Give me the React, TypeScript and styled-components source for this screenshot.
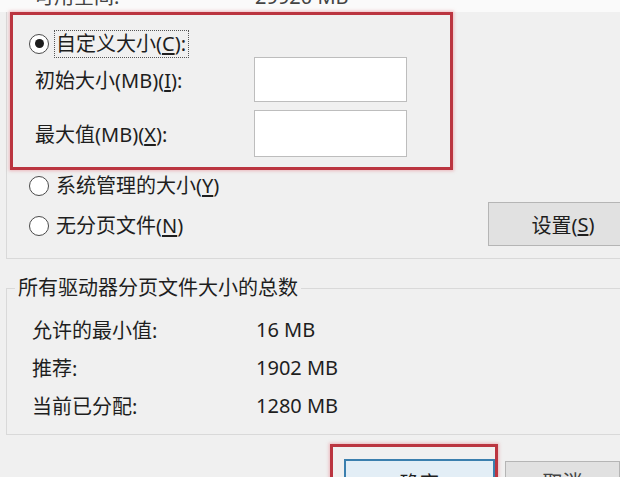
import React from "react";
import styled, { createGlobalStyle } from "styled-components";

const Global = createGlobalStyle`
  html, body { margin: 0; padding: 0; background: #f0f0f0; }
  body { font-family: "Noto Sans", "Noto Sans CJK SC", sans-serif; color: #1e1e1e; }
`;

const Page = styled.div`
  width: 620px;
  height: 477px;
  overflow: hidden;
  background: #f0f0f0;
  font-size: 20px;
`;

const TopStrip = styled.div`
  height: 12px;
  background: #fafafa;
  overflow: hidden;
  display: flex;
  padding-left: 34px;
  box-sizing: border-box;
`;

const CutText = styled.span<{ $w: number }>`
  flex: none;
  width: ${(p) => p.$w}px;
  line-height: 28px;
  margin-top: -17px;
  color: #444;
`;

const Group = styled.div`
  margin-left: 6px;
  width: 640px;
  border-left: 1px solid #d9d9d9;
  border-bottom: 1px solid #d9d9d9;
  padding-left: 3px;
  box-sizing: border-box;
`;

const RedFrame = styled.div`
  width: 443px;
  box-sizing: border-box;
  border: 3px solid #bb3540;
  box-shadow: 0 0 3px 1px rgba(232, 130, 140, 0.5);
  padding: 15px 0 10px 16px;
  display: flex;
  flex-direction: column;
`;

const RadioRow = styled.div<{ $h: number }>`
  height: ${(p) => p.$h}px;
  display: flex;
  align-items: center;
`;

const RadioCircle = styled.span`
  width: 20px;
  height: 20px;
  border-radius: 50%;
  border: 1.5px solid #4a4a4a;
  background: #fff;
  box-sizing: border-box;
  display: flex;
  align-items: center;
  justify-content: center;
  flex: none;
`;

const Dot = styled.span`
  width: 9px;
  height: 9px;
  border-radius: 50%;
  background: #1c1c1c;
`;

const RadioLabel = styled.span<{ $focus?: boolean }>`
  margin-left: 5px;
  line-height: 26px;
  padding: 0 2px 0 1px;
  border: 1px dotted ${(p) => (p.$focus ? "#555" : "transparent")};
`;

const FieldRow = styled.div<{ $mt: number }>`
  display: grid;
  grid-template-columns: 219px 153px;
  align-items: center;
  margin-top: ${(p) => p.$mt}px;
  padding-left: 6px;
`;

const Input = styled.div<{ $h: number }>`
  height: ${(p) => p.$h}px;
  background: #ffffff;
  border: 1px solid #bdbdbd;
  box-sizing: border-box;
`;

const Lower = styled.div`
  display: grid;
  grid-template-columns: 1fr auto;
  padding: 4px 0 12px 0;
`;

const LowerLeft = styled.div`
  display: flex;
  flex-direction: column;
  gap: 16px;
  padding-left: 19px;
`;

const Button = styled.div<{ $w: number; $h: number }>`
  width: ${(p) => p.$w}px;
  height: ${(p) => p.$h}px;
  background: #e1e1e1;
  border: 1px solid #b5b5b5;
  box-sizing: border-box;
  display: flex;
  align-items: center;
  justify-content: center;
`;

const SettingsButton = styled(Button)`
  margin-top: 28px;
  margin-right: 20px;
  padding-left: 12px;
`;

const Fieldset = styled.fieldset`
  margin: 15px 0 0 6px;
  width: 640px;
  box-sizing: border-box;
  border: 1px solid #d9d9d9;
  border-right: none;
  padding: 8px 0 10px 25px;
`;

const Legend = styled.legend`
  margin-left: -17px;
  padding: 0 3px;
  line-height: 28px;
`;

const StatRow = styled.div`
  display: grid;
  grid-template-columns: 224px auto;
  height: 38px;
  align-items: center;
`;

const BottomRow = styled.div`
  display: flex;
  align-items: flex-start;
  margin-top: 9px;
  padding-left: 330px;
`;

const RedFrame2 = styled.div`
  width: 173px;
  height: 60px;
  box-sizing: border-box;
  border: 3px solid #bb3540;
  box-shadow: 0 0 3px 1px rgba(232, 130, 140, 0.5);
  padding: 12px 0 0 11px;
`;

const OkButton = styled.div`
  width: 151px;
  height: 40px;
  box-sizing: border-box;
  border: 2px solid #3b7fae;
  background: #e3eef6;
  display: flex;
  justify-content: center;
  padding-top: 9px;
  line-height: 28px;
`;

const CancelButton = styled(Button)`
  margin: 17px 0 0 7px;
  align-items: flex-start;
  padding-top: 7px;
  line-height: 28px;
  color: #444;
`;

const U = styled.span`
  text-decoration: underline;
  text-underline-offset: 2px;
`;

const Radio: React.FC<{ checked?: boolean }> = ({ checked }) => (
  <RadioCircle>{checked && <Dot />}</RadioCircle>
);

export default function App() {
  return (
    <>
      <Global />
      <Page>
        <TopStrip>
          <CutText $w={221}>可用空间:</CutText>
          <CutText $w={120}>29920 MB</CutText>
        </TopStrip>
        <Group>
          <RedFrame>
            <RadioRow $h={27}>
              <Radio checked />
              <RadioLabel $focus>
                自定义大小(<U>C</U>):
              </RadioLabel>
            </RadioRow>
            <FieldRow $mt={0}>
              <span>
                初始大小(MB)(<U>I</U>):
              </span>
              <Input $h={45} />
            </FieldRow>
            <FieldRow $mt={8}>
              <span>
                最大值(MB)(<U>X</U>):
              </span>
              <Input $h={47} />
            </FieldRow>
          </RedFrame>
          <Lower>
            <LowerLeft>
              <RadioRow $h={24}>
                <Radio />
                <RadioLabel>
                  系统管理的大小(<U>Y</U>)
                </RadioLabel>
              </RadioRow>
              <RadioRow $h={24}>
                <Radio />
                <RadioLabel>
                  无分页文件(<U>N</U>)
                </RadioLabel>
              </RadioRow>
            </LowerLeft>
            <SettingsButton $w={138} $h={44}>
              设置(<U>S</U>)
            </SettingsButton>
          </Lower>
        </Group>
        <Fieldset>
          <Legend>所有驱动器分页文件大小的总数</Legend>
          <StatRow>
            <span>允许的最小值:</span>
            <span>16 MB</span>
          </StatRow>
          <StatRow>
            <span>推荐:</span>
            <span>1902 MB</span>
          </StatRow>
          <StatRow>
            <span>当前已分配:</span>
            <span>1280 MB</span>
          </StatRow>
        </Fieldset>
        <BottomRow>
          <RedFrame2>
            <OkButton>确定</OkButton>
          </RedFrame2>
          <CancelButton $w={120} $h={40}>
            取消
          </CancelButton>
        </BottomRow>
      </Page>
    </>
  );
}
